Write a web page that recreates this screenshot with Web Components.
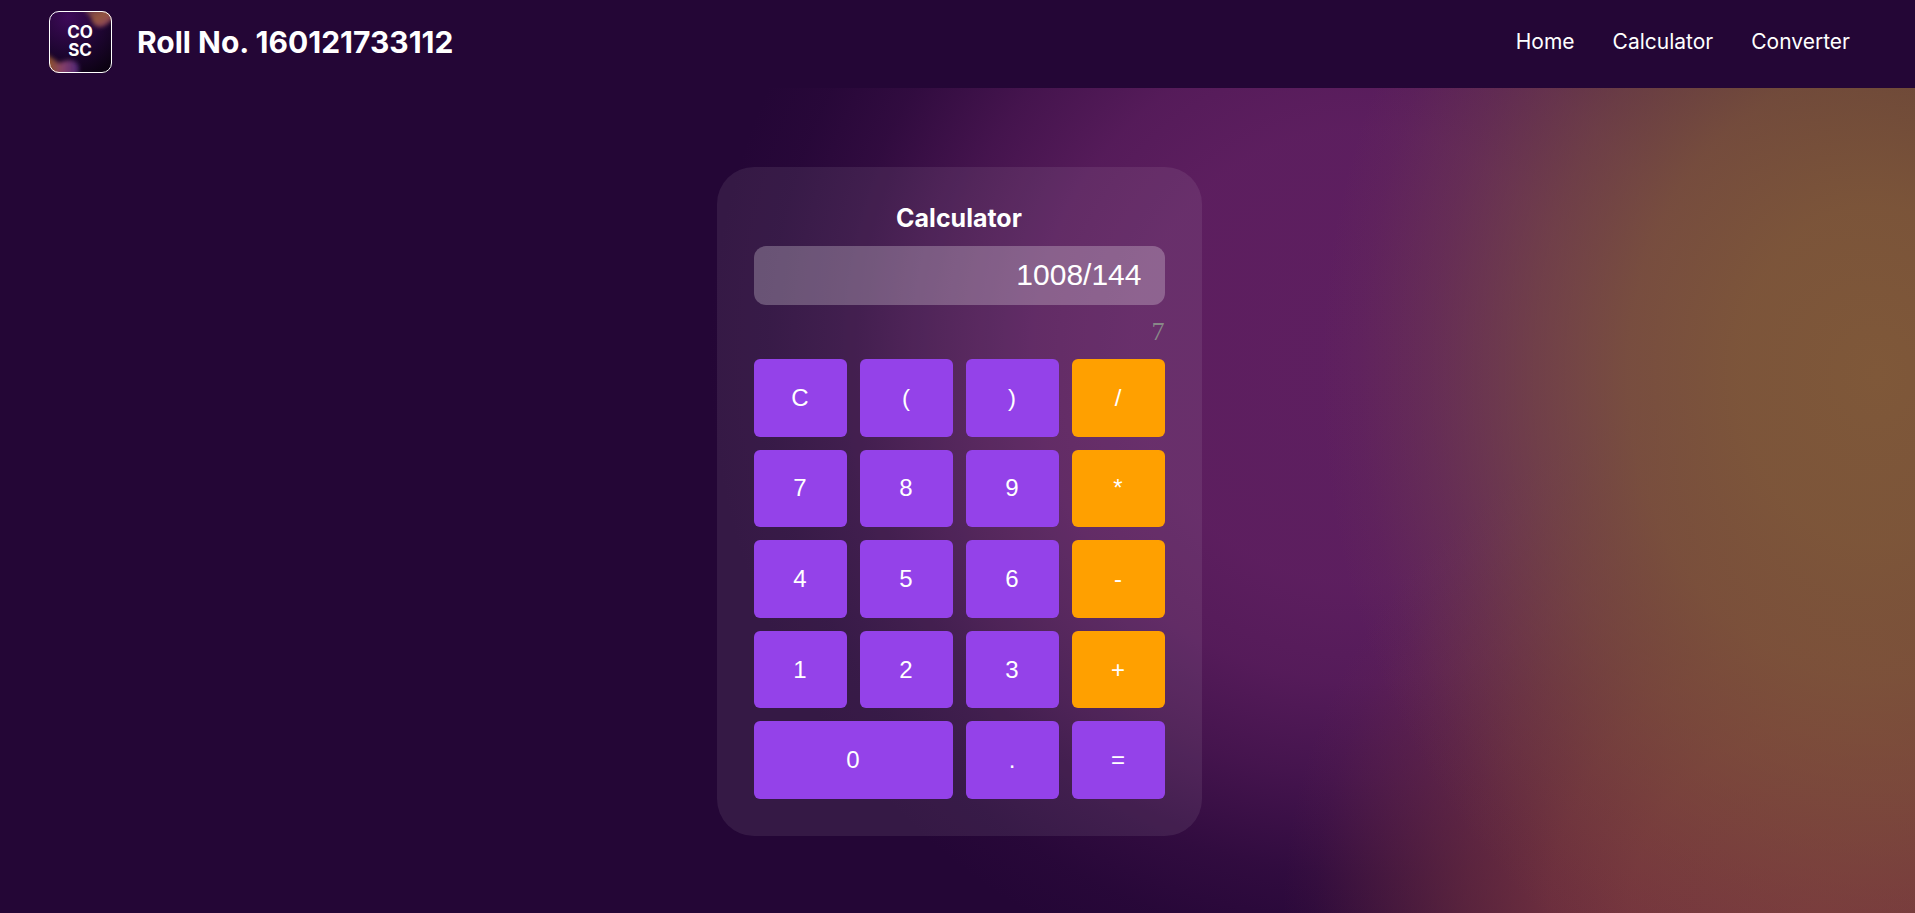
<!DOCTYPE html>
<html lang="en">
<head>
<meta charset="utf-8">
<meta name="viewport" content="width=device-width, initial-scale=1">
<title>Calculator</title>
<style>
  body { margin: 0; background: #240636; color: #fff; font-family: Inter, sans-serif; }
</style>
</head>
<body>
<calc-app>
  <site-header slot="header" heading="Roll No. 160121733112">
    <nav-link href="#home">Home</nav-link>
    <nav-link href="#calculator">Calculator</nav-link>
    <nav-link href="#converter">Converter</nav-link>
  </site-header>
  <calc-card heading="Calculator" expression="1008/144"></calc-card>
</calc-app>

<script>
function define(name, html, setup) {
  const template = document.createElement('template');
  template.innerHTML = html;
  customElements.define(name, class extends HTMLElement {
    connectedCallback() {
      if (this.shadowRoot) return;
      this.attachShadow({ mode: 'open' }).append(template.content.cloneNode(true));
      if (setup) setup(this, this.shadowRoot);
    }
  });
}

define('calc-app', `
  <style>
    :host {
      display: flex; flex-direction: column; min-height: 100vh;
      background:
        radial-gradient(ellipse 29% 74% at 98% 41%, #7f5839 0%, #7f5839f2 25%, #7f5839d0 45%, #7f583990 62%, #7f583940 80%, #7f583910 93%, #7f583900 100%),
        radial-gradient(ellipse 28% 58% at 95% 100%, #78353f 0%, #78353ff5 35%, #78353fd8 50%, #78353f98 66%, #78353f40 84%, #78353f10 94%, #78353f00 100%),
        radial-gradient(ellipse 34% 71% at 71% 39%, #5e1f60 0%, #5e1f60f8 35%, #5e1f60d8 50%, #5e1f6090 65%, #5e1f6038 80%, #5e1f6010 91%, #5e1f6000 100%),
        #240636;
    }
    main { flex: 1; display: flex; justify-content: center; align-items: flex-start; padding: 79px 24px 77px 27px; }
  </style>
  <slot name="header"></slot>
  <main><slot></slot></main>`);

define('cosc-logo', `
  <style>:host { display: block; } svg { display: block; }</style>
  <svg width="63" height="62" viewBox="0 0 63 62" role="img" aria-label="COSC">
    <defs>
      <clipPath id="box"><rect width="63" height="62" rx="10"/></clipPath>
      <filter id="soft" x="-50%" y="-50%" width="200%" height="200%"><feGaussianBlur stdDeviation="2"/></filter>
      <radialGradient id="bg" cx=".3" cy=".1" r="1"><stop offset="0" stop-color="#3d0a58"/><stop offset=".6" stop-color="#1d0530"/><stop offset="1" stop-color="#0c0213"/></radialGradient>
      <linearGradient id="top" x1="0" y1="0" x2="1" y2="1"><stop offset="0" stop-color="#5b2c50"/><stop offset=".5" stop-color="#94573f"/><stop offset="1" stop-color="#84356a"/></linearGradient>
      <linearGradient id="low"><stop offset="0" stop-color="#8d5319"/><stop offset=".5" stop-color="#86406a"/><stop offset="1" stop-color="#4b2375"/></linearGradient>
    </defs>
    <g clip-path="url(#box)">
      <rect width="63" height="62" fill="url(#bg)"/>
      <path d="M33 -2Q42 4 44 12Q49 19 57 14L66 6V-3Z" fill="url(#top)" filter="url(#soft)"/>
      <path d="M-3 43Q5 48 10 52Q20 47 27 51Q32 56 28 65H-3Z" fill="url(#low)" filter="url(#soft)"/>
    </g>
    <rect x=".5" y=".5" width="62" height="61" rx="9.5" fill="none" stroke="#fff"/>
    <g fill="#fff" font-family="Inter, sans-serif" font-weight="700" font-size="17" text-anchor="middle">
      <text x="31" y="27">CO</text>
      <text x="31" y="45">SC</text>
    </g>
  </svg>`);

define('site-header', `
  <style>
    :host { display: block; background: #240636; }
    header { display: flex; align-items: center; justify-content: space-between; height: 88px; padding: 0 65px 0 49px; box-sizing: border-box; }
    .brand { display: flex; align-items: center; gap: 25px; padding-bottom: 4px; }
    h1 { margin: 0; font-size: 30px; line-height: 36px; font-weight: 700; }
    nav { display: flex; gap: 38px; padding-bottom: 4px; }
  </style>
  <header>
    <div class="brand"><cosc-logo></cosc-logo><h1></h1></div>
    <nav aria-label="Main"><slot></slot></nav>
  </header>`, (host, root) => {
  root.querySelector('h1').textContent = host.getAttribute('heading');
});

define('nav-link', `
  <style>
    :host { display: block; }
    a { color: #fff; text-decoration: none; font-size: 21px; line-height: 24px; }
    a:hover { text-decoration: underline; }
  </style>
  <a><slot></slot></a>`, (host, root) => {
  root.querySelector('a').href = host.getAttribute('href');
});

define('calc-key', `
  <style>
    :host { display: grid; }
    :host([wide]) { grid-column: span 2; }
    button { border: 0; border-radius: 6px; padding: 0; background: #9442e9; color: #fff; font: 24px/28px "Liberation Sans", Arial, sans-serif; cursor: pointer; }
    :host([operator]) button { background: #ffa000; }
    button:hover { filter: brightness(1.1); }
  </style>
  <button type="button"><slot></slot></button>`);

define('calc-card', `
  <style>
    :host { display: block; box-sizing: border-box; width: 485px; padding: 37px; border-radius: 37px; background: rgba(255, 255, 255, .08); }
    h2 { margin: 0 0 13px; font-size: 25px; line-height: 29px; font-weight: 700; text-align: center; }
    input { display: block; box-sizing: border-box; width: 100%; height: 59px; padding: 0 23px 2px; border: 0; border-radius: 12px; outline: 0; background: rgba(255, 255, 255, .25); color: #fff; font: 30px/34px "Liberation Sans", Arial, sans-serif; text-align: right; }
    output { display: block; height: 54px; font: 26px/54px "Liberation Serif", serif; color: #888; text-align: right; }
    .keys { display: grid; grid-template-columns: repeat(4, 1fr); grid-template-rows: repeat(5, 1fr); gap: 13px; height: 440px; }
  </style>
  <h2></h2>
  <input id="expression" type="text" aria-label="Expression" autocomplete="off">
  <output for="expression"></output>
  <div class="keys">
    <calc-key>C</calc-key><calc-key>(</calc-key><calc-key>)</calc-key><calc-key operator>/</calc-key>
    <calc-key>7</calc-key><calc-key>8</calc-key><calc-key>9</calc-key><calc-key operator>*</calc-key>
    <calc-key>4</calc-key><calc-key>5</calc-key><calc-key>6</calc-key><calc-key operator>-</calc-key>
    <calc-key>1</calc-key><calc-key>2</calc-key><calc-key>3</calc-key><calc-key operator>+</calc-key>
    <calc-key wide>0</calc-key><calc-key>.</calc-key><calc-key>=</calc-key>
  </div>`, (host, root) => {
  const input = root.querySelector('input');
  const output = root.querySelector('output');
  const refresh = () => { output.textContent = evaluate(input.value); };
  root.querySelector('h2').textContent = host.getAttribute('heading');
  input.value = host.getAttribute('expression') || '';
  input.addEventListener('input', refresh);
  root.querySelector('.keys').addEventListener('click', event => {
    const key = event.target.closest('calc-key');
    if (!key) return;
    const label = key.textContent;
    if (label === 'C') input.value = '';
    else if (label === '=') input.value = evaluate(input.value);
    else input.value += label;
    refresh();
  });
  refresh();
});

// Recursive descent over + - * / and parentheses; empty string when incomplete.
function evaluate(source) {
  const tokens = source.match(/\d*\.?\d+|[-+*/()]/g) || [];
  let i = 0;
  const atom = () => {
    const token = tokens[i++];
    if (token === '-') return -atom();
    if (token === '(') { const value = sum(); i++; return value; }
    return Number(token);
  };
  const product = () => {
    let value = atom();
    while (tokens[i] === '*' || tokens[i] === '/') value = tokens[i++] === '*' ? value * atom() : value / atom();
    return value;
  };
  const sum = () => {
    let value = product();
    while (tokens[i] === '+' || tokens[i] === '-') value = tokens[i++] === '+' ? value + product() : value - product();
    return value;
  };
  const result = sum();
  return Number.isFinite(result) ? String(result) : '';
}
</script>
</body>
</html>
